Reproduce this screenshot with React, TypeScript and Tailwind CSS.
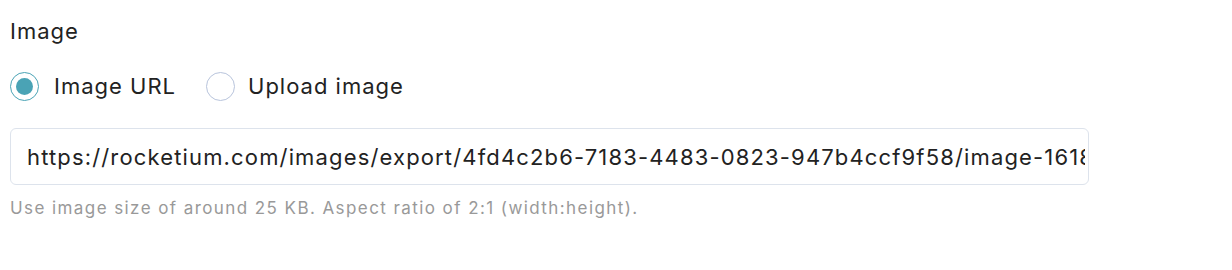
import React from "react";

export default function App() {
  const url =
    "https://rocketium.com/images/export/4fd4c2b6-7183-4483-0823-947b4ccf9f58/image-1618326112345.png";
  return (
    <div
      className="w-[1232px] h-[270px] bg-white text-[#222] pl-[10px] pt-[17px]"
      style={{ fontFamily: "Inter, 'Noto Sans', sans-serif" }}
    >
      <div className="text-[22px] leading-[28px] tracking-[1px]">Image</div>
      <div className="flex items-center mt-[26px] h-[30px]">
        <label className="flex items-center">
          <span className="w-[29px] h-[29px] rounded-full border border-[#4aa3b5] flex items-center justify-center">
            <span className="w-[17px] h-[17px] rounded-full bg-[#4aa3b5]" />
          </span>
          <span className="ml-[15px] text-[22px] tracking-[1px]">Image URL</span>
        </label>
        <label className="flex items-center ml-[30px]">
          <span className="w-[29px] h-[29px] rounded-full border border-[#b8c4dc]" />
          <span className="ml-[13px] text-[22px] tracking-[1px]">Upload image</span>
        </label>
      </div>
      <input
        readOnly
        value={url}
        className="mt-[27px] block w-[1079px] h-[57px] border border-[#dde3ec] rounded-[6px] pl-[16px] pr-[3px] text-[22px] tracking-[1.15px] text-[#222] bg-white outline-none"
        style={{ fontFamily: "Inter, 'Noto Sans', sans-serif" }}
      />
      <div className="mt-[11px] text-[17px] leading-[24px] tracking-[1.42px] text-[#999]">
        Use image size of around 25 KB. Aspect ratio of 2:1 (width:height).
      </div>
    </div>
  );
}
